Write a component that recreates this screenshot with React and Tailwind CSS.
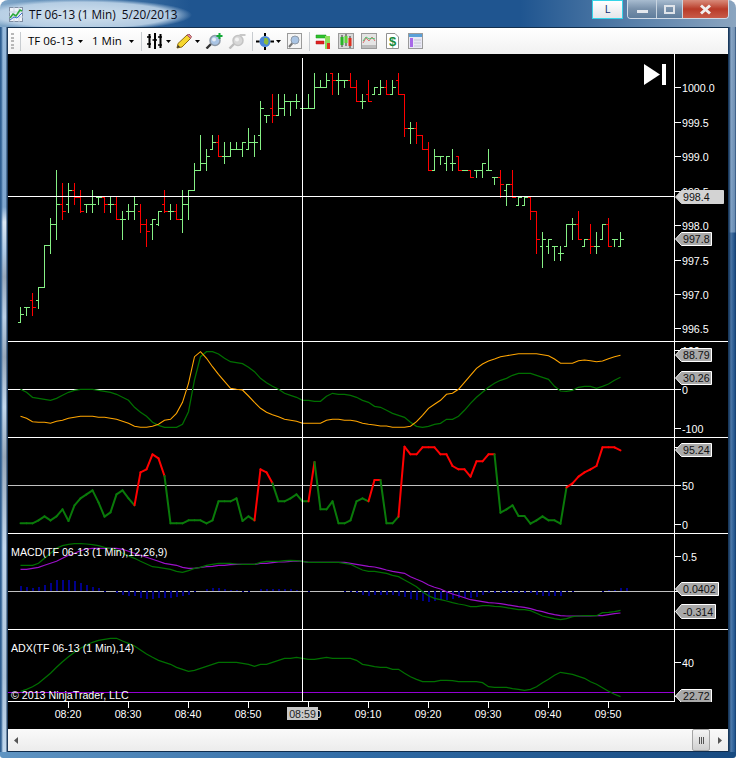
const bars = [
  [742, 785, 785, 763, 'g'], [742, 765, 742, 742, 'g'], [700, 765, 721, 742, 'r'], [680, 743, 721, 680, 'g'],
  [556, 680, 680, 556, 'g'], [475, 578, 556, 493, 'g'], [330, 537, 493, 433, 'g'], [370, 476, 433, 454, 'r'],
  [370, 455, 433, 391, 'g'], [370, 433, 391, 412, 'r'], [391, 455, 412, 454, 'r'], [433, 455, 433, 433, 'g'],
  [391, 455, 433, 433, 'g'], [412, 433, 412, 412, 'g'], [412, 455, 412, 433, 'r'], [412, 455, 433, 433, 'g'],
  [412, 476, 433, 476, 'r'], [454, 537, 476, 476, 'g'], [433, 476, 454, 454, 'g'], [412, 476, 454, 433, 'g'],
  [433, 515, 454, 493, 'r'], [476, 557, 493, 514, 'r'], [476, 537, 493, 476, 'g'], [454, 495, 493, 454, 'g'],
  [391, 455, 433, 454, 'r'], [433, 476, 454, 454, 'g'], [433, 476, 454, 476, 'r'], [391, 515, 476, 433, 'g'],
  [391, 476, 433, 391, 'g'], [310, 391, 391, 331, 'g'], [226, 331, 331, 310, 'g'], [268, 331, 310, 289, 'g'],
  [226, 268, 268, 247, 'g'], [226, 289, 247, 289, 'r'], [247, 310, 289, 289, 'g'], [247, 289, 289, 268, 'g'],
  [247, 268, 268, 268, 'g'], [247, 289, 268, 247, 'g'], [205, 268, 268, 247, 'g'], [226, 289, 247, 247, 'g'],
  [123, 268, 226, 145, 'g'], [165, 185, 165, 165, 'g'], [103, 185, 145, 165, 'r'], [103, 165, 165, 145, 'g'],
  [103, 165, 145, 124, 'g'], [124, 165, 124, 124, 'g'], [103, 145, 124, 124, 'g'], [145, 145, 145, 145, 'g'],
  [103, 145, 145, 145, 'g'], [40, 145, 145, 82, 'g'], [61, 82, 82, 82, 'g'], [40, 82, 82, 61, 'g'],
  [40, 103, 40, 61, 'r'], [40, 103, 61, 61, 'g'], [61, 82, 61, 61, 'g'], [40, 82, 61, 82, 'r'],
  [61, 124, 82, 124, 'r'], [103, 145, 124, 124, 'g'], [61, 124, 103, 124, 'r'], [82, 103, 103, 82, 'g'],
  [61, 103, 103, 82, 'g'], [61, 103, 82, 103, 'r'], [61, 103, 103, 82, 'g'], [40, 103, 61, 103, 'r'],
  [103, 227, 103, 205, 'r'], [185, 248, 205, 205, 'g'], [185, 248, 205, 226, 'r'], [226, 268, 226, 268, 'r'],
  [247, 331, 268, 331, 'r'], [268, 331, 331, 289, 'g'], [289, 312, 289, 289, 'g'], [289, 331, 310, 289, 'g'],
  [268, 331, 310, 310, 'g'], [289, 331, 289, 331, 'r'], [331, 331, 331, 331, 'g'], [331, 350, 331, 350, 'r'],
  [331, 350, 331, 331, 'g'], [310, 350, 331, 310, 'g'], [268, 331, 331, 331, 'g'], [350, 372, 350, 350, 'g'],
  [331, 412, 350, 372, 'r'], [372, 434, 391, 372, 'g'], [331, 412, 372, 412, 'r'], [412, 434, 434, 412, 'g'],
  [412, 434, 434, 412, 'g'], [412, 476, 412, 454, 'r'], [454, 578, 454, 536, 'r'], [515, 620, 557, 536, 'g'],
  [536, 578, 557, 536, 'g'], [557, 600, 557, 557, 'g'], [557, 600, 578, 578, 'g'], [493, 557, 557, 493, 'g'],
  [475, 536, 493, 493, 'g'], [454, 536, 493, 536, 'r'], [536, 557, 557, 536, 'g'], [493, 578, 536, 557, 'r'],
  [515, 578, 557, 557, 'g'], [493, 536, 536, 493, 'g'], [475, 557, 493, 557, 'r'], [536, 557, 536, 536, 'g'],
  [515, 557, 557, 536, 'g'],
]

const cciOrange = [229, 235, 245, 247, 247, 250, 244, 241, 235, 232, 229, 229, 229, 232, 232, 235, 238, 244, 250, 259, 262, 262, 259, 253, 241, 238, 220, 187, 130, 50, 35, 55, 80, 103, 124, 145, 148, 150, 168, 187, 205, 217, 224, 230, 238, 241, 244, 250, 250, 250, 250, 241, 238, 238, 241, 241, 244, 250, 253,
  255, 258, 258, 262, 262, 262, 259, 245, 226, 205, 193, 181, 163, 160, 148, 127, 106, 85, 72, 63, 57, 50, 47, 44, 41, 41, 41, 41, 44, 47, 57, 70, 70, 70, 62, 60, 62, 65, 63, 56, 50, 46]
const cciGreen = [148, 157, 172, 175, 178, 181, 175, 166, 157, 151, 148, 148, 148, 151, 154, 157, 163, 172, 181, 202, 217, 229, 247, 256, 262, 262, 262, 253, 215, 120, 50, 35, 35, 42, 55, 65, 68, 71, 82, 95, 115, 128, 139, 148, 160, 166, 172, 181, 181, 184, 184, 169, 160, 163, 163, 166, 172, 181, 187,
  199, 202, 211, 220, 226, 232, 247, 259, 262, 259, 253, 250, 238, 238, 229, 211, 190, 172, 157, 142, 130, 121, 115, 106, 100, 100, 100, 106, 112, 118, 139, 153, 154, 151, 142, 139, 139, 145, 139, 132, 121, 112]
const stoch = [550, 550, 550, 541, 529, 541, 529, 508, 543, 496, 475, 463, 451, 487, 530, 517, 463, 451, 475, 496, 397, 388, 343, 355, 408, 550, 550, 550, 541, 541, 541, 550, 541, 484, 484, 484, 475, 543, 529, 541, 388, 397, 430, 484, 484, 475, 463, 484, 484, 366, 508, 508, 484, 550, 550, 541, 484, 475, 484,
  420, 420, 550, 550, 530, 320, 343, 343, 322, 322, 322, 343, 343, 378, 388, 388, 410, 364, 364, 343, 343, 518, 508, 496, 528, 528, 551, 541, 529, 541, 541, 551, 442, 430, 410, 397, 388, 378, 322, 322, 322, 331]
const macdGreen = [106, 106, 106, 100, 85, 70, 55, 47, 43, 41, 41, 42, 44, 47, 52, 55, 60, 70, 78, 85, 94, 102, 110, 112, 115, 118, 124, 127, 122, 115, 112, 106, 103, 100, 100, 100, 102, 103, 103, 103, 97, 94, 94, 94, 92, 91, 92, 94, 97, 97, 97, 97, 97, 97, 100, 103, 112, 120, 124,
  124, 127, 130, 136, 140, 150, 160, 170, 185, 197, 205, 209, 213, 218, 222, 225, 230, 230, 227, 227, 229, 230, 233, 236, 239, 239, 242, 250, 258, 262, 266, 269, 266, 260, 258, 257, 257, 257, 248, 247, 245, 241]
const macdPurple = [118, 118, 115, 112, 106, 100, 94, 85, 76, 70, 62, 57, 55, 55, 55, 55, 55, 58, 64, 70, 76, 82, 88, 94, 100, 103, 106, 112, 115, 115, 112, 110, 109, 106, 106, 104, 103, 103, 103, 103, 100, 100, 98, 96, 96, 94, 93, 94, 97, 97, 97, 97, 97, 97, 97, 100, 103, 106, 109,
  111, 115, 120, 124, 127, 130, 140, 148, 155, 165, 172, 177, 185, 192, 197, 203, 209, 212, 215, 218, 219, 221, 224, 227, 230, 232, 236, 241, 245, 250, 254, 257, 258, 258, 258, 258, 258, 257, 257, 254, 251, 249]
// histogram ends, 184 = the zero line, 0 = no bar on that minute
const macdHist = [168, 172, 174, 172, 166, 160, 151, 150, 150, 154, 160, 166, 172, 174, 182, 0, 190, 195, 197, 197, 204, 207, 207, 204, 203, 203, 200, 197, 194, 187, 0, 178, 174, 175, 178, 180, 181, 182, 182, 0, 178, 178, 178, 178, 178, 178, 181, 0, 186, 0, 0, 0, 0, 0, 187, 187, 190, 194, 197,
  195, 194, 194, 194, 197, 200, 207, 210, 213, 215, 213, 209, 209, 206, 205, 205, 203, 200, 194, 190, 190, 190, 190, 190, 190, 190, 190, 195, 197, 197, 197, 197, 187, 187, 0, 0, 0, 0, 182, 181, 180, 174, 175]
const adx = [484, 478, 470, 460, 445, 430, 412, 395, 380, 367, 355, 345, 337, 331, 328, 325, 325, 333, 340, 348, 360, 372, 382, 391, 397, 403, 412, 418, 424, 421, 415, 409, 403, 397, 397, 397, 397, 400, 403, 409, 403, 403, 397, 391, 385, 385, 382, 385, 388, 388, 385, 382, 385, 385, 385, 385, 391, 403, 406,
  410, 412, 412, 418, 418, 430, 440, 448, 455, 455, 455, 451, 451, 452, 455, 455, 455, 455, 458, 470, 472, 472, 472, 476, 478, 481, 478, 470, 458, 448, 436, 427, 430, 433, 439, 445, 455, 463, 473, 484, 493, 500]

const barX = (i) => 20 + 6 * i
const line = (list, top) => list.map((z, i) => `${barX(i) + 0.5},${(top + z / 3).toFixed(1)}`).join(' ')

function AxisTick({ y, label }) {
  return (
    <g>
      <path d={`M675 ${y + 0.5}H681`} stroke="#fff" shapeRendering="crispEdges" />
      {label && <text x="682" y={y + 5} className="fill-white text-[10.67px]">{label}</text>}
    </g>
  )
}

function PriceTag({ y, h = 14, w, label, fill = '#a9a9a9', outline = '#fff' }) {
  const mid = y + h / 2
  return (
    <g>
      <polygon points={`675.5,${mid} 681.5,${y + 0.5} ${675.5 + w},${y + 0.5} ${675.5 + w},${y + h - 0.5} 681.5,${y + h - 0.5}`} fill={fill} stroke={outline} />
      <text x="683" y={mid + 4} className="fill-[#111] text-[10.67px]">{label}</text>
    </g>
  )
}

function Panel({ top, height, border = true, children }) {
  return (
    <div className={border ? 'border-b border-white' : ''}>
      <svg width="720" height={height} viewBox={`8 ${top} 720 ${height}`} className="block font-['Liberation_Sans',sans-serif]">
        <path d={`M674.5 ${top}V${top + height}`} stroke="#fff" shapeRendering="crispEdges" />
        {children}
      </svg>
    </div>
  )
}

function PricePanel() {
  return (
    <Panel top={54} height={287}>
      {bars.map(([hi, lo, open, close, c], i) => {
        const x = barX(i) + 0.5
        const y = (z) => Math.round(60 + z / 3) + 0.5
        return (
          <path
            key={i}
            d={`M${x} ${y(hi) - 0.5}V${y(lo) + 0.5}M${x - 3} ${y(open)}H${x}M${x} ${y(close)}H${x + 3}`}
            stroke={c === 'g' ? '#85f085' : '#ff0000'}
            fill="none"
            shapeRendering="crispEdges"
          />
        )
      })}
      <path d="M8 196.5H674" stroke="#fff" shapeRendering="crispEdges" />
      <polygon points="644,64 660,74.5 644,85" fill="#fff" />
      <rect x="662" y="64" width="4" height="21" fill="#fff" />
      <AxisTick y={87} label="1000.0" />
      <AxisTick y={122} label="999.5" />
      <AxisTick y={156} label="999.0" />
      <AxisTick y={191} label="998.5" />
      <AxisTick y={225} label="998.0" />
      <AxisTick y={260} label="997.5" />
      <AxisTick y={294} label="997.0" />
      <AxisTick y={328} label="996.5" />
      <PriceTag y={190} w={48} label="998.4" fill="#d3d3d3" outline="#d3d3d3" />
      <PriceTag y={232} w={36} label="997.8" />
    </Panel>
  )
}

function CciPanel() {
  return (
    <Panel top={342} height={95}>
      <path d="M8 389.5H674" stroke="#fff" shapeRendering="crispEdges" />
      <polyline points={line(cciGreen, 340)} fill="none" stroke="#007000" strokeWidth="1.25" />
      <polyline points={line(cciOrange, 340)} fill="none" stroke="#ffa500" strokeWidth="1.1" />
      <AxisTick y={350} label="100" />
      <AxisTick y={389} label="0" />
      <AxisTick y={428} label="-100" />
      <PriceTag y={348} w={36} label="88.79" />
      <PriceTag y={371} w={36} label="30.26" />
    </Panel>
  )
}

function StochPanel() {
  return (
    <Panel top={438} height={95}>
      <path d="M8 485.5H674" stroke="#c0c0c0" shapeRendering="crispEdges" />
      {stoch.slice(1).map((z, i) => (
        <line
          key={i}
          x1={barX(i) + 0.5}
          y1={340 + stoch[i] / 3}
          x2={barX(i + 1) + 0.5}
          y2={340 + z / 3}
          stroke={z < 440 ? '#ff0000' : '#0a7a0a'}
          strokeWidth="2"
          strokeLinecap="round"
        />
      ))}
      <AxisTick y={447} />
      <AxisTick y={485} label="50" />
      <AxisTick y={524} label="0" />
      <PriceTag y={443} w={36} label="95.24" />
    </Panel>
  )
}

function MacdPanel() {
  return (
    <Panel top={534} height={95}>
      <path d="M8 591.5H674" stroke="#c0c0c0" shapeRendering="crispEdges" />
      {macdHist.map((z, i) => {
        if (!z) return null
        const end = 530 + z / 3
        const y = Math.round(Math.min(end, 591))
        const h = Math.max(1, Math.round(Math.abs(end - 591)))
        return <rect key={i} x={barX(i)} y={y} width="2" height={h} fill="#00008b" shapeRendering="crispEdges" />
      })}
      <polyline points={line(macdPurple, 530)} fill="none" stroke="#9a10c8" strokeWidth="1.2" />
      <polyline points={line(macdGreen, 530)} fill="none" stroke="#007000" strokeWidth="1.25" />
      <text x="11" y="556" className="fill-white text-[10.67px]">MACD(TF 06-13 (1 Min),12,26,9)</text>
      <AxisTick y={556} label="0.5" />
      <AxisTick y={591} />
      <PriceTag y={582} w={43} label="0.0402" />
      <PriceTag y={604} h={15} w={40} label="-0.314" />
    </Panel>
  )
}

function AdxPanel() {
  return (
    <Panel top={630} height={72} border={false}>
      <path d="M8 692.5H674" stroke="#9400d3" shapeRendering="crispEdges" />
      <polyline points={line(adx, 530)} fill="none" stroke="#007000" strokeWidth="1.25" />
      <path d="M8 701.5H675" stroke="#fff" shapeRendering="crispEdges" />
      <text x="11" y="652" className="fill-white text-[10.67px]">ADX(TF 06-13 (1 Min),14)</text>
      <text x="11" y="699" className="fill-white text-[10.67px]">© 2013 NinjaTrader, LLC</text>
      <AxisTick y={662} label="40" />
      <AxisTick y={696} />
      <PriceTag y={689} w={36} label="22.72" />
    </Panel>
  )
}

function TimeAxis() {
  const times = [[68, '08:20'], [128, '08:30'], [188, '08:40'], [248, '08:50'], [308, '09:00'], [368, '09:10'], [428, '09:20'], [488, '09:30'], [548, '09:40'], [608, '09:50']]
  return (
    <svg width="720" height="27" viewBox="8 702 720 27" className="block font-['Liberation_Sans',sans-serif]">
      {times.map(([x, t]) => (
        <g key={t}>
          <path d={`M${x + 0.5} 702V708`} stroke="#fff" shapeRendering="crispEdges" />
          <text x={x} y="718" textAnchor="middle" className="fill-white text-[10.67px]">{t}</text>
        </g>
      ))}
      <rect x="287" y="707" width="31" height="13" fill="#c8c8c8" />
      <text x="302.5" y="718" textAnchor="middle" className="fill-[#222] text-[10.67px]">08:59</text>
    </svg>
  )
}

function TitleIcon() {
  return (
    <svg width="14" height="15" viewBox="0 0 14 15" className="mt-[7px] shrink-0">
      <rect x="0.5" y="0.5" width="13" height="14" fill="#eef2f8" stroke="#7f8ea3" />
      <path d="M0 5H14M0 10H14M5 0V15M10 0V15" stroke="#c8d2e2" />
      <path d="M1 11L4 7L7 9L11 3L13 4" fill="none" stroke="#2aa83a" strokeWidth="1.6" />
      <path d="M1 13L5 10L8 11L13 6" fill="none" stroke="#3a6ed0" />
    </svg>
  )
}

function DropArrow({ className = '' }) {
  return (
    <svg width="5" height="3" viewBox="0 0 5 3" className={`shrink-0 ${className}`}>
      <path d="M0 0H5L2.5 3Z" fill="#000" />
    </svg>
  )
}

function Separator({ className = '' }) {
  return <div className={`h-[19px] w-px shrink-0 bg-[#c8ccd0] ${className}`} />
}

function Lens({ fill = '#a9c4e4', ring = '#8e9aa8', handle = '#333' }) {
  return (
    <g>
      <path d="M6.5 10.5L1.5 15.5" stroke={handle} strokeWidth="2.4" />
      <circle cx="10" cy="7.5" r="5" fill={fill} stroke={ring} strokeWidth="1.5" />
      <circle cx="9" cy="6.5" r="2" fill="#fff" opacity="0.7" />
    </g>
  )
}

function Toolbar() {
  return (
    <div className="flex h-[26px] items-center whitespace-nowrap rounded-[3px] bg-gradient-to-b from-white to-[#f1f1f1] pl-[3px] font-['Open_Sans',sans-serif] text-[11.5px] text-black">
      <div className="flex h-[16px] w-[3px] shrink-0 flex-col justify-between">
        {[0, 1, 2, 3, 4].map((n) => <div key={n} className="h-[2px] w-[3px] bg-[#b8b8b8]" />)}
      </div>
      <Separator className="ml-[6px]" />
      <span className="ml-[7px] w-[45px] shrink-0">TF 06-13</span>
      <DropArrow className="ml-[5px]" />
      <span className="ml-[9px] w-[32px] shrink-0">1 Min</span>
      <DropArrow className="ml-[5px]" />
      <Separator className="ml-[7px]" />

      <svg width="17" height="16" viewBox="0 0 17 16" className="ml-[4px] shrink-0">
        <path d="M3.5 1V15M9 0V16M14.5 1V15" stroke="#000" strokeWidth="2" />
        <path d="M1 4H5M1 11H5M6.5 7H11M12 4H16M12 12H16" stroke="#000" strokeWidth="1.5" />
      </svg>
      <DropArrow className="ml-[3px]" />

      <svg width="16" height="15" viewBox="0 0 16 15" className="ml-[5px] shrink-0">
        <path d="M1 14L2 9.5L11 1L14.5 4.5L6 13Z" fill="#f6d72e" stroke="#8c6a12" />
        <path d="M11 1L13 0L15.5 2.5L14.5 4.5Z" fill="#e88a94" stroke="#a05a60" />
        <path d="M1 14L2 11L4 13Z" fill="#333" />
      </svg>
      <DropArrow className="ml-[3px]" />

      <svg width="18" height="16" viewBox="0 0 18 16" className="ml-[5px] shrink-0">
        <Lens />
        <path d="M14.5 0V6M11.5 3H17.5" stroke="#12a838" strokeWidth="2" />
      </svg>
      <svg width="18" height="16" viewBox="0 0 18 16" className="ml-[5px] shrink-0">
        <Lens fill="#d8d8d8" ring="#c4c4c4" handle="#bcbcbc" />
        <path d="M11.5 2H17.5" stroke="#c8c8c8" strokeWidth="2" />
      </svg>
      <Separator className="ml-[6px]" />

      <svg width="18" height="17" viewBox="0 0 18 17" className="ml-[3px] shrink-0">
        <circle cx="9" cy="8.5" r="5.5" fill="#4a86d8" />
        <path d="M6 5C8 4 9 6 8 8C7 10 9 11 11 12C13 10 13 7 11 5Z" fill="#8cbc3c" />
        <path d="M9 0V3M9 14V17M0 8.5H3.5M14.5 8.5H18" stroke="#000" strokeWidth="2" />
      </svg>
      <DropArrow className="ml-[2px]" />

      <svg width="15" height="16" viewBox="0 0 15 16" className="ml-[6px] shrink-0">
        <rect x="0.5" y="0.5" width="14" height="15" fill="#f4f4f4" stroke="#9a9a9a" />
        <path d="M5.5 10L2 14" stroke="#777" strokeWidth="2" />
        <circle cx="8" cy="7" r="4" fill="#a9c4e4" stroke="#8e9aa8" />
      </svg>
      <Separator className="ml-[7px]" />

      <svg width="17" height="16" viewBox="0 0 17 16" className="ml-[5px] shrink-0">
        <path d="M1 2H11V5H1Z" fill="#2ec22e" stroke="#189018" strokeWidth="0.5" />
        <rect x="10" y="3" width="5" height="13" fill="#8ade5a" />
        <path d="M1 8H9V11H1Z" fill="#e02020" stroke="#b01818" strokeWidth="0.5" />
        <rect x="12" y="10" width="3" height="6" fill="#e03020" />
      </svg>
      <svg width="16" height="16" viewBox="0 0 16 16" className="ml-[6px] shrink-0">
        <rect x="0.5" y="0.5" width="15" height="15" fill="#d8d8d8" stroke="#9a9a9a" />
        <path d="M4 2V14M8 1V13M12 3V15" stroke="#333" />
        <rect x="2.5" y="4" width="3" height="8" fill="#28b428" />
        <rect x="6.5" y="3" width="3" height="7" fill="#5fd53a" />
        <rect x="10.5" y="5" width="3" height="8" fill="#e03020" />
      </svg>
      <svg width="16" height="16" viewBox="0 0 16 16" className="ml-[7px] shrink-0">
        <rect x="0.5" y="0.5" width="15" height="15" fill="#e4e4e4" stroke="#9a9a9a" />
        <path d="M1 12H15V15H1Z" fill="#bcbcbc" />
        <path d="M2 10L5 5L8 8L11 4L14 8" fill="none" stroke="#e07070" />
        <path d="M2 8L5 4L8 6L11 5L14 6" fill="none" stroke="#50c070" />
      </svg>
      <svg width="13" height="16" viewBox="0 0 13 16" className="ml-[9px] shrink-0">
        <path d="M0.5 0.5H9L12.5 4V15.5H0.5Z" fill="#fff" stroke="#909090" />
        <text x="6.5" y="13" textAnchor="middle" className="fill-[#178a3c] font-['Liberation_Sans'] text-[13px] font-bold">$</text>
      </svg>
      <svg width="15" height="16" viewBox="0 0 15 16" className="ml-[9px] shrink-0">
        <rect x="0.5" y="0.5" width="14" height="15" fill="#e8e8f4" stroke="#9a9a9a" />
        <rect x="1" y="1" width="13" height="3" fill="#5aa0d8" />
        <rect x="2" y="5" width="3" height="9" fill="#a868e8" />
        <path d="M6 7H13M6 10H13M6 13H13" stroke="#c4c4d4" />
      </svg>
    </div>
  )
}

function TitleBar() {
  return (
    <div className="flex h-[27px] items-start rounded-t-[8px] bg-[radial-gradient(ellipse_108px_16px_at_84px_15px,rgba(214,228,240,0.98),rgba(190,212,232,0.9)_80%,rgba(190,212,232,0)_100%),linear-gradient(90deg,#7fa6c8_0,#4e7fae_90px,#1f5590_190px,#1f5590_520px,#5b82ab_640px,#8ba5c0_736px)] pl-[9px] pr-[7px]">
      <TitleIcon />
      <span className="ml-[6px] mt-[6px] whitespace-pre font-['Open_Sans',sans-serif] text-[11.75px] text-[#0a0a14]">TF 06-13 (1 Min)  5/20/2013</span>
      <div className="ml-auto flex h-[19px] w-[31px] items-center justify-center border border-[#35d4e8] bg-gradient-to-b from-white to-[#e4e6ea] font-['Open_Sans',sans-serif] text-[11px] text-[#102a70]">L</div>
      <div className="ml-[4px] flex h-[19px] w-[102px] overflow-hidden rounded-b-[4px] border border-t-0 border-[#d0dae6]">
        <div className="flex w-[28px] items-end justify-center bg-gradient-to-b from-[#a8bcd0] via-[#7890aa] to-[#5f7d9c] pb-[5px]">
          <div className="h-[3px] w-[11px] bg-[#e4e8ee]" />
        </div>
        <div className="flex w-[27px] items-center justify-center border-x border-[#c8d4e0] bg-gradient-to-b from-[#a8bcd0] via-[#7890aa] to-[#5f7d9c]">
          <div className="h-[9px] w-[11px] border-2 border-[#dfe4ea]" />
        </div>
        <div className="flex flex-1 items-center justify-center bg-gradient-to-b from-[#d88a7a] via-[#b83a28] to-[#c85a48]">
          <svg width="13" height="11" viewBox="0 0 13 11">
            <path d="M2 1.5L11 9.5M11 1.5L2 9.5" stroke="#f0eeee" strokeWidth="3" />
          </svg>
        </div>
      </div>
    </div>
  )
}

function ScrollBar() {
  return (
    <div className="box-content flex h-[22px] items-center border-b border-[#0f2c4c] bg-gradient-to-b from-[#fafafa] to-[#ececec] pl-[6px] pr-[6px]">
      <svg width="4" height="7" viewBox="0 0 4 7"><path d="M4 0V7L0 3.5Z" fill="#555" /></svg>
      <div className="ml-auto flex h-[22px] w-[18px] items-center justify-center gap-px rounded-[2px] border border-[#a4a4a4] bg-gradient-to-b from-[#f4f4f4] to-[#d0d0d0]">
        <div className="h-[7px] w-px bg-[#555]" />
        <div className="h-[7px] w-px bg-[#555]" />
        <div className="h-[7px] w-px bg-[#555]" />
      </div>
      <svg width="4" height="7" viewBox="0 0 4 7" className="ml-[8px]"><path d="M0 0V7L4 3.5Z" fill="#555" /></svg>
    </div>
  )
}

export default function App() {
  return (
    <div className="h-[758px] w-[739px] overflow-hidden bg-white">
      <div className="flex h-full w-[736px] flex-col">
        <TitleBar />
        <div className="flex flex-1">
          <div className="w-2 bg-[linear-gradient(90deg,#2f5f92_0,#2f5f92_1px,rgba(190,215,240,0.2)_3px,rgba(220,235,250,0.1)_6px,#1d3a5c_7px,#1d3a5c_8px),linear-gradient(180deg,#8fb4d8_0,#6f9ac6_180px,#dfeaf5_195px,#a9c6e4_225px,#8e9eb0_250px,#b8cee6_290px,#8e9eb0_330px,#c0d6ec_380px,#8e9eb0_430px,#c0d6ec_520px,#a4bcd4_650px,#c0d8ee_730px)]" />
          <div className="w-[720px] border-t border-[#12304f]">
            <Toolbar />
            <div className="relative bg-black">
              <PricePanel />
              <CciPanel />
              <StochPanel />
              <MacdPanel />
              <AdxPanel />
              <TimeAxis />
              {/* crosshair runs through all the panels */}
              <div className="absolute left-[294px] top-[4px] h-[644px] w-px bg-white" />
            </div>
            <ScrollBar />
          </div>
          <div className="w-2 bg-[linear-gradient(90deg,#18385c_0,#18385c_1px,rgba(160,190,220,0.35)_3px,rgba(20,50,90,0.1)_7px,#143a66_8px),linear-gradient(180deg,#7f9cbc_0,#6f93ba_205px,#1d4f88_206px,#235a96_758px)]" />
        </div>
        <div className="h-[6px] rounded-b-[3px] bg-gradient-to-r from-[#5f94c2] via-[#2f6aa4] to-[#174a80]" />
      </div>
    </div>
  )
}
